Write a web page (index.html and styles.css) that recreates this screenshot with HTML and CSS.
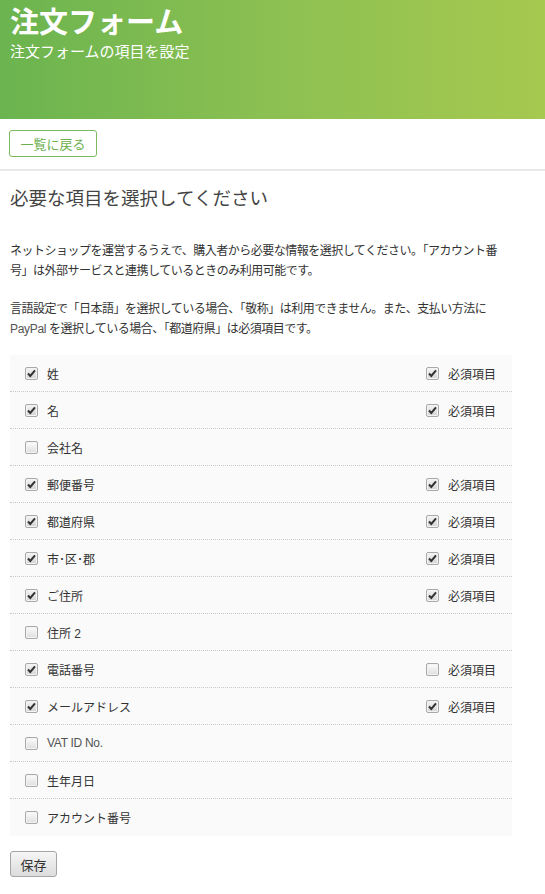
FILE: index.html
```html
<!DOCTYPE html>
<html lang="ja">
<head>
<meta charset="utf-8">
<title>注文フォーム</title>
<link rel="stylesheet" href="styles.css">
</head>
<body>
<header class="hero">
  <h1 class="hero-title">注文フォーム</h1>
  <p class="hero-sub">注文フォームの項目を設定</p>
</header>
<div class="toolbar">
  <a class="back-btn" href="#">一覧に戻る</a>
</div>
<main class="main">
  <h2 class="section-title">必要な項目を選択してください</h2>
  <p class="desc">ネットショップを運営するうえで、購入者から必要な情報を選択してください。「アカウント番<br>号」は外部サービスと連携しているときのみ利用可能です。</p>
  <p class="desc">言語設定で「日本語」を選択している場合、「敬称」は利用できません。また、支払い方法に<br><span class="latin">PayPal</span> を選択している場合、「都道府県」は必須項目です。</p>
  <ul class="fields">
    <li class="field"><span class="opt"><span class="cb on"></span>姓</span><span class="opt req"><span class="cb on"></span>必須項目</span></li>
    <li class="field"><span class="opt"><span class="cb on"></span>名</span><span class="opt req"><span class="cb on"></span>必須項目</span></li>
    <li class="field"><span class="opt"><span class="cb"></span>会社名</span></li>
    <li class="field"><span class="opt"><span class="cb on"></span>郵便番号</span><span class="opt req"><span class="cb on"></span>必須項目</span></li>
    <li class="field"><span class="opt"><span class="cb on"></span>都道府県</span><span class="opt req"><span class="cb on"></span>必須項目</span></li>
    <li class="field"><span class="opt"><span class="cb on"></span>市･区･郡</span><span class="opt req"><span class="cb on"></span>必須項目</span></li>
    <li class="field"><span class="opt"><span class="cb on"></span>ご住所</span><span class="opt req"><span class="cb on"></span>必須項目</span></li>
    <li class="field"><span class="opt"><span class="cb"></span>住所 2</span></li>
    <li class="field"><span class="opt"><span class="cb on"></span>電話番号</span><span class="opt req"><span class="cb"></span>必須項目</span></li>
    <li class="field"><span class="opt"><span class="cb on"></span>メールアドレス</span><span class="opt req"><span class="cb on"></span>必須項目</span></li>
    <li class="field"><span class="opt"><span class="cb"></span><span class="latin">VAT ID No.</span></span></li>
    <li class="field"><span class="opt"><span class="cb"></span>生年月日</span></li>
    <li class="field"><span class="opt"><span class="cb"></span>アカウント番号</span></li>
  </ul>
  <button class="save-btn" type="button">保存</button>
</main>
</body>
</html>
```
FILE: styles.css
```css
html, body {
  margin: 0;
  padding: 0;
  background: #fff;
}
body {
  font-family: "Liberation Sans", "Noto Sans CJK JP", sans-serif;
  color: #333;
  font-size: 12px;
}
.hero {
  height: 119px;
  box-sizing: border-box;
  padding: 0 10px;
  background: linear-gradient(to right, #6bb44f 0%, #8cc052 50%, #a6c94f 100%);
  color: #fff;
}
.hero-title {
  margin: 0;
  font-size: 29px;
  line-height: 40px;
  height: 40px;
  font-weight: bold;
  font-family: "Noto Sans CJK JP", sans-serif;
}
.hero-sub {
  margin: 0;
  font-size: 15px;
  line-height: 22px;
  font-family: "Noto Sans CJK JP", sans-serif;
}
.toolbar {
  padding: 11px 9px 12px;
  border-bottom: 2px solid #e8e8e8;
}
.back-btn {
  display: inline-block;
  box-sizing: border-box;
  width: 88px;
  height: 27px;
  line-height: 25px;
  text-align: center;
  border: 1px solid #7cbb5d;
  border-radius: 3px;
  color: #6cb04e;
  font-size: 13px;
  text-decoration: none;
  font-family: "Noto Sans CJK JP", sans-serif;
}
.main {
  padding: 0 10px;
  width: 502px;
}
.section-title {
  margin: 12px 0 0;
  font-size: 18.5px;
  line-height: 28px;
  font-weight: normal;
  color: #444;
  font-family: "Noto Sans CJK JP", sans-serif;
}
.desc {
  margin: 0;
  font-size: 12px;
  line-height: 20px;
  white-space: nowrap;
  letter-spacing: -0.5px;
}
.section-title + .desc {
  margin-top: 30px;
}
.desc + .desc {
  margin-top: 18px;
}
.latin {
  font-family: "Liberation Sans", sans-serif;
  color: #555;
  letter-spacing: -0.3px;
}
.fields {
  list-style: none;
  margin: 16px 0 0;
  padding: 0;
  background: #fafafa;
}
.field {
  display: flex;
  justify-content: space-between;
  align-items: center;
  height: 37px;
  box-sizing: border-box;
  padding: 0 16px 0 15px;
  border-bottom: 1px dotted #c8c8c8;
}
.field:last-child {
  border-bottom: none;
}
.opt {
  display: flex;
  align-items: center;
  gap: 9px;
  font-size: 12px;
  color: #333;
}
.cb {
  display: inline-block;
  width: 13px;
  height: 13px;
  box-sizing: border-box;
  border: 1px solid #a9a9a9;
  border-radius: 2px;
  background: linear-gradient(#fcfcfc, #dedede);
  box-shadow: inset 0 0 0 1px #f4f4f4;
}
.cb.on {
  background:
    url("data:image/svg+xml,%3Csvg xmlns='http://www.w3.org/2000/svg' width='11' height='11' viewBox='0 0 11 11'%3E%3Cpath d='M2 5.5 L4.3 8 L9 2.3' fill='none' stroke='%23333' stroke-width='2'/%3E%3C/svg%3E") center/11px 11px no-repeat,
    linear-gradient(#f4f4f4, #d4d4d4);
}
.save-btn {
  margin: 15px 0 0;
  width: 47px;
  height: 26px;
  padding: 0;
  border: 1px solid #a5a5a5;
  border-radius: 3px;
  background: linear-gradient(#f6f6f6, #dcdcdc);
  color: #333;
  font-size: 13px;
  font-family: "Noto Sans CJK JP", sans-serif;
}
```
